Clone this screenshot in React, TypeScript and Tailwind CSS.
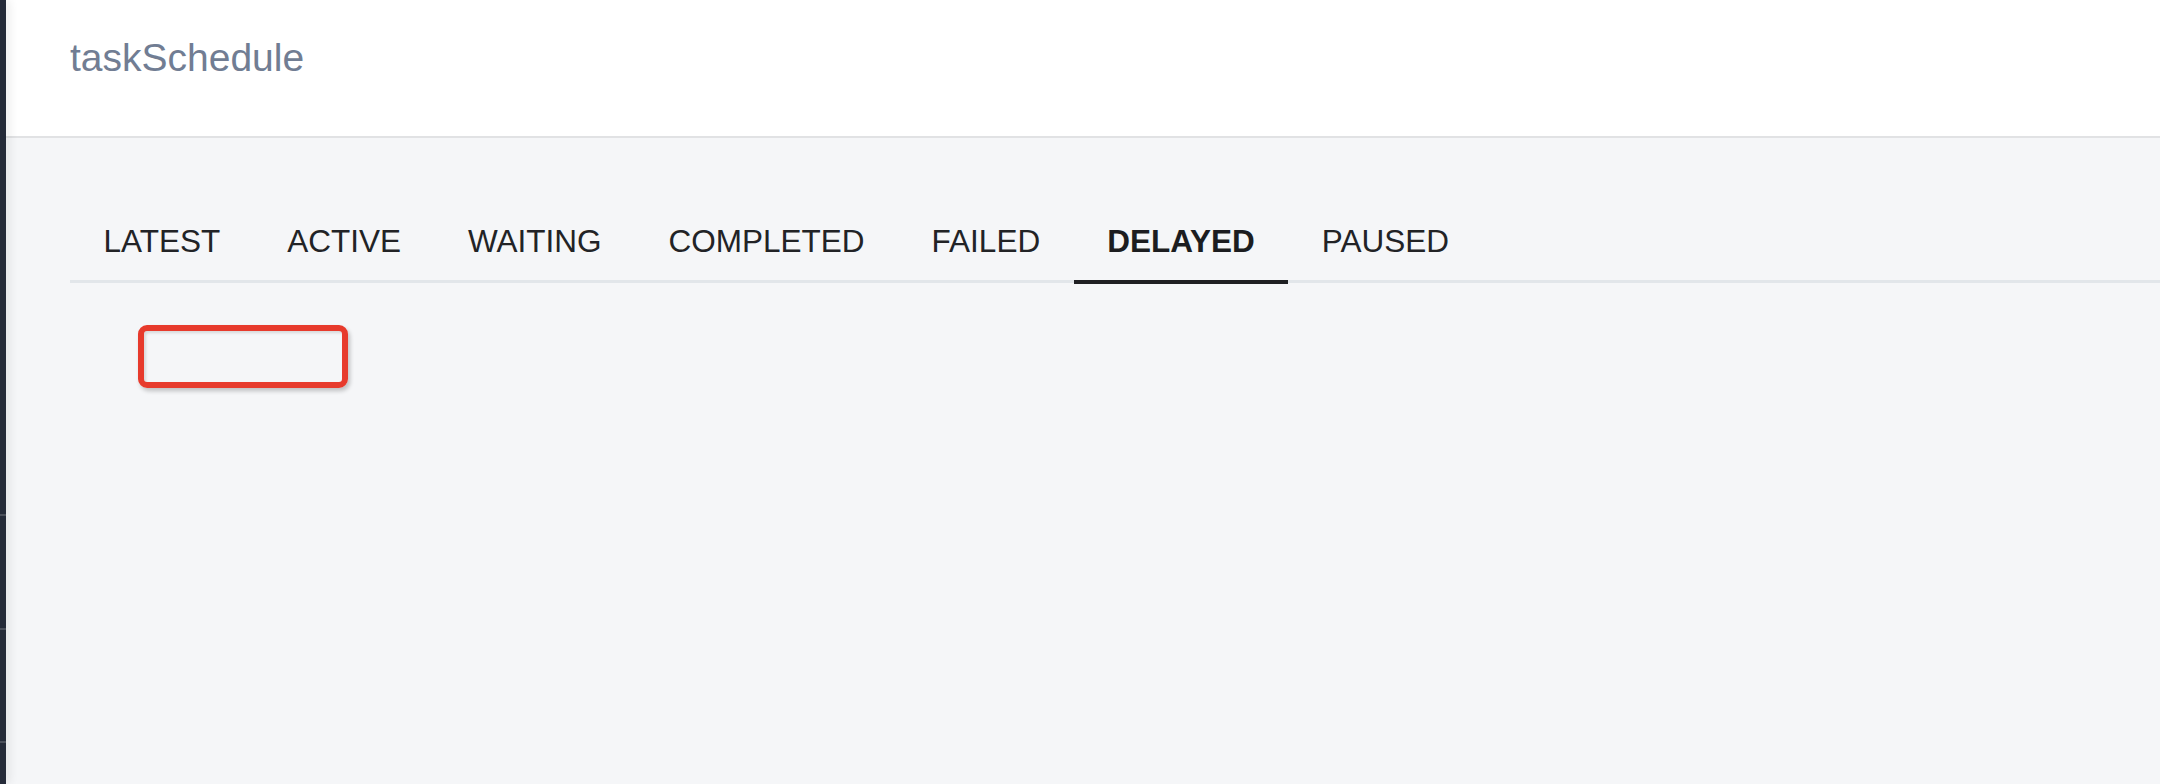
import React, { useState } from 'react';

const TABS = ['LATEST', 'ACTIVE', 'WAITING', 'COMPLETED', 'FAILED', 'DELAYED', 'PAUSED'];

const App: React.FC = () => {
  const [active, setActive] = useState('DELAYED');

  return (
    <div
      className="flex h-[784px] w-full overflow-hidden bg-[#f5f6f8]"
      style={{ fontFamily: '"Liberation Sans", Arial, sans-serif' }}
    >
      {/* Sidebar edge */}
      <aside className="relative z-10 flex w-[6px] shrink-0 flex-col bg-[#252b39] shadow-[3px_0_10px_rgba(0,0,0,0.10)]">
        <div className="h-[514px]" />
        <div className="h-[2px] bg-[#4b505b]" />
        <div className="h-[112px]" />
        <div className="h-[2px] bg-[#4b505b]" />
        <div className="h-[111px]" />
        <div className="h-[2px] bg-[#4b505b]" />
      </aside>

      <main className="flex min-w-0 flex-1 flex-col">
        <header className="h-[138px] shrink-0 border-b-2 border-[#e1e2e4] bg-white pl-[64px] pt-[38px]">
          <h1 className="text-[39px] leading-[39px] font-normal text-[#717d93]">taskSchedule</h1>
        </header>

        <div className="ml-[64px] mt-[87px]">
          {/* Tabs */}
          <div className="flex border-b-[3px] border-[#e2e6ea]">
            {TABS.map((tab) => (
              <button
                key={tab}
                onClick={() => setActive(tab)}
                className={`relative px-[33.5px] pb-[23px] text-[31.5px] leading-[32px] ${
                  active === tab ? 'font-bold text-[#1c1d20]' : 'font-normal text-[#222326]'
                }`}
              >
                {tab}
                {active === tab && (
                  <span className="absolute bottom-[-4px] left-0 right-0 h-[4px] bg-[#1f2023]" />
                )}
              </button>
            ))}
          </div>

          {/* Empty highlighted slot */}
          <div className="ml-[68px] mt-[42px] h-[63px] w-[210px] rounded-[9px] border-[6px] border-[#e73a2c] shadow-[2px_3px_4px_rgba(0,0,0,0.22),inset_2px_2px_3px_rgba(0,0,0,0.12)]" />
        </div>
      </main>
    </div>
  );
};

export default App;
